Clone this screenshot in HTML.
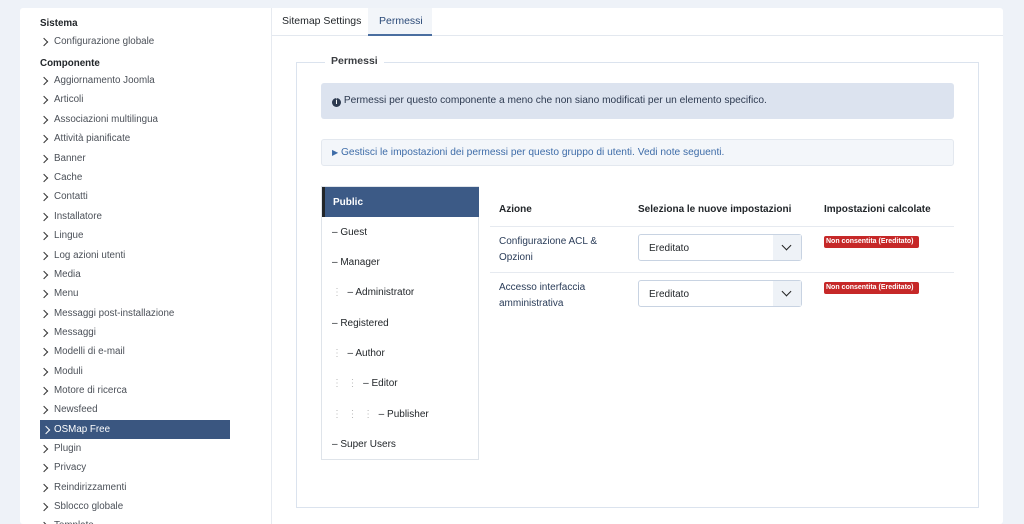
<!DOCTYPE html>
<html style="width:1024px;height:524px;overflow:hidden"><head><meta charset="utf-8"><style>
*{box-sizing:border-box;margin:0;padding:0}
body{width:1024px;height:524px;overflow:hidden;background:#eef2f8;font-family:"Liberation Sans",sans-serif;font-size:10px;color:#22262a;position:relative}
.card{position:absolute;left:20px;top:8px;width:983px;height:516px;background:#fff;border-radius:3px}
.side{position:absolute;left:20px;top:8px;width:252px;height:516px;border-right:1px solid #e6eaf0}
.a{position:absolute;left:40px;font-size:9.8px;white-space:nowrap}
.h{font-weight:bold;color:#22262a}
.i{color:#4b5058;padding-left:14px}
.i:before{content:"";position:absolute;left:1px;top:3px;width:5px;height:5px;border-right:1.3px solid #333;border-top:1.3px solid #333;transform:rotate(45deg)}
.act{left:40px;width:190px;height:19px;background:#3a5680;color:#fff;padding-top:4px}
.act:before{border-color:#fff;left:3px;top:7px}
.tabs{position:absolute;left:272px;top:8px;width:731px;height:28px;border-bottom:1px solid #e3e8ef}
.tab{position:absolute;top:8px;font-size:10.5px}
.fs{position:absolute;left:296px;top:62px;width:683px;height:446px;border:1px solid #dbe3ee}
.leg{position:absolute;left:325px;top:55px;background:#fff;padding:0 6px;font-size:10.5px;font-weight:bold;color:#3b3e42}
.info{position:absolute;left:321px;top:83px;width:633px;height:36px;background:#dce3ef;border-radius:3px;font-size:10.2px;color:#2d3a50;padding:12px 0 0 11px}
.det{position:absolute;left:321px;top:139px;width:633px;height:27px;background:#f3f6fa;border:1px solid #e3e8ef;border-radius:3px;font-size:10.2px;color:#3e6ca8;padding:7px 0 0 10px}
.grp{position:absolute;left:321px;top:186px;width:158px;height:274px;border:1px solid #dfe4ea}
.g{position:absolute;left:10px;font-size:10px;color:#22262a}
.pub{position:absolute;left:0;top:0;width:157px;height:30px;background:#3c5a86;border-left:3px solid #22262a;color:#fff;font-weight:bold;padding:10px 0 0 8px}
.dots{color:#bbb}
.th{position:absolute;top:204px;font-weight:bold;font-size:10px}
.line{position:absolute;left:490px;width:464px;height:1px;background:#e6eaf0}
.td{position:absolute;font-size:10px;line-height:16px;color:#2a3c58}
.sel{position:absolute;left:638px;width:164px;height:27px;border:1px solid #c8d3e2;border-radius:3px;font-size:10px;padding:8px 0 0 10px;color:#22262a}
.sel b{position:absolute;right:0;top:0;width:28px;height:25px;background:#eef2f7}
.sel b:after{content:"";position:absolute;left:10px;top:7px;width:6px;height:6px;border-right:1.5px solid #222;border-bottom:1.5px solid #222;transform:rotate(45deg)}
.bad{position:absolute;left:824px;width:95px;height:12px;background:#c62828;border-radius:2px;color:#fff;font-size:7px;font-weight:bold;padding:2px 0 0 2px;white-space:nowrap}
</style></head><body>
<div class="card"></div>
<div class="side"></div>
<div class="a h" style="top:18px">Sistema</div>
<div class="a i" style="top:36px">Configurazione globale</div>
<div class="a h" style="top:58px">Componente</div>
<div class="a i" style="top:75px">Aggiornamento Joomla</div>
<div class="a i" style="top:94px">Articoli</div>
<div class="a i" style="top:114px">Associazioni multilingua</div>
<div class="a i" style="top:133px">Attività pianificate</div>
<div class="a i" style="top:153px">Banner</div>
<div class="a i" style="top:172px">Cache</div>
<div class="a i" style="top:191px">Contatti</div>
<div class="a i" style="top:211px">Installatore</div>
<div class="a i" style="top:230px">Lingue</div>
<div class="a i" style="top:250px">Log azioni utenti</div>
<div class="a i" style="top:269px">Media</div>
<div class="a i" style="top:288px">Menu</div>
<div class="a i" style="top:308px">Messaggi post-installazione</div>
<div class="a i" style="top:327px">Messaggi</div>
<div class="a i" style="top:346px">Modelli di e-mail</div>
<div class="a i" style="top:366px">Moduli</div>
<div class="a i" style="top:385px">Motore di ricerca</div>
<div class="a i" style="top:404px">Newsfeed</div>
<div class="a i act" style="top:420px">OSMap Free</div>
<div class="a i" style="top:443px">Plugin</div>
<div class="a i" style="top:462px">Privacy</div>
<div class="a i" style="top:482px">Reindirizzamenti</div>
<div class="a i" style="top:501px">Sblocco globale</div>
<div class="a i" style="top:520px">Template</div>

<div class="tabs"></div>
<div class="tab" style="left:282px;top:15px">Sitemap Settings</div>
<div style="position:absolute;left:368px;top:8px;width:64px;height:28px;background:#f2f5f9;border-bottom:2px solid #4a6ea0"></div>
<div class="tab" style="left:379px;top:15px;color:#2b4a78">Permessi</div>

<div class="fs"></div>
<div class="leg">Permessi</div>
<div class="info"><span style="display:inline-block;width:9px;height:9px;border-radius:50%;background:#2d3a50;color:#fff;font-size:7px;text-align:center;line-height:9px;font-weight:bold;vertical-align:-1px">i</span> Permessi per questo componente a meno che non siano modificati per un elemento specifico.</div>
<div class="det"><span style="font-size:8px">▶</span> Gestisci le impostazioni dei permessi per questo gruppo di utenti. Vedi note seguenti.</div>

<div class="grp">
<div class="pub">Public</div>
<div class="g" style="top:40px">– Guest</div>
<div class="g" style="top:70px">– Manager</div>
<div class="g" style="top:100px"><span class="dots">⋮</span>&nbsp; – Administrator</div>
<div class="g" style="top:131px">– Registered</div>
<div class="g" style="top:161px"><span class="dots">⋮</span>&nbsp; – Author</div>
<div class="g" style="top:191px"><span class="dots">⋮ &nbsp;⋮</span>&nbsp; – Editor</div>
<div class="g" style="top:222px"><span class="dots">⋮ &nbsp;⋮ &nbsp;⋮</span>&nbsp; – Publisher</div>
<div class="g" style="top:252px">– Super Users</div>
</div>

<div class="th" style="left:499px">Azione</div>
<div class="th" style="left:638px">Seleziona le nuove impostazioni</div>
<div class="th" style="left:824px">Impostazioni calcolate</div>
<div class="line" style="top:226px"></div>
<div class="line" style="top:272px"></div>
<div class="td" style="left:499px;top:234px">Configurazione ACL &amp;<br>Opzioni</div>
<div class="td" style="left:499px;top:280px">Accesso interfaccia<br>amministrativa</div>
<div class="sel" style="top:234px">Ereditato<b></b></div>
<div class="sel" style="top:280px">Ereditato<b></b></div>
<div class="bad" style="top:236px">Non consentita (Ereditato)</div>
<div class="bad" style="top:282px">Non consentita (Ereditato)</div>
</body></html>
